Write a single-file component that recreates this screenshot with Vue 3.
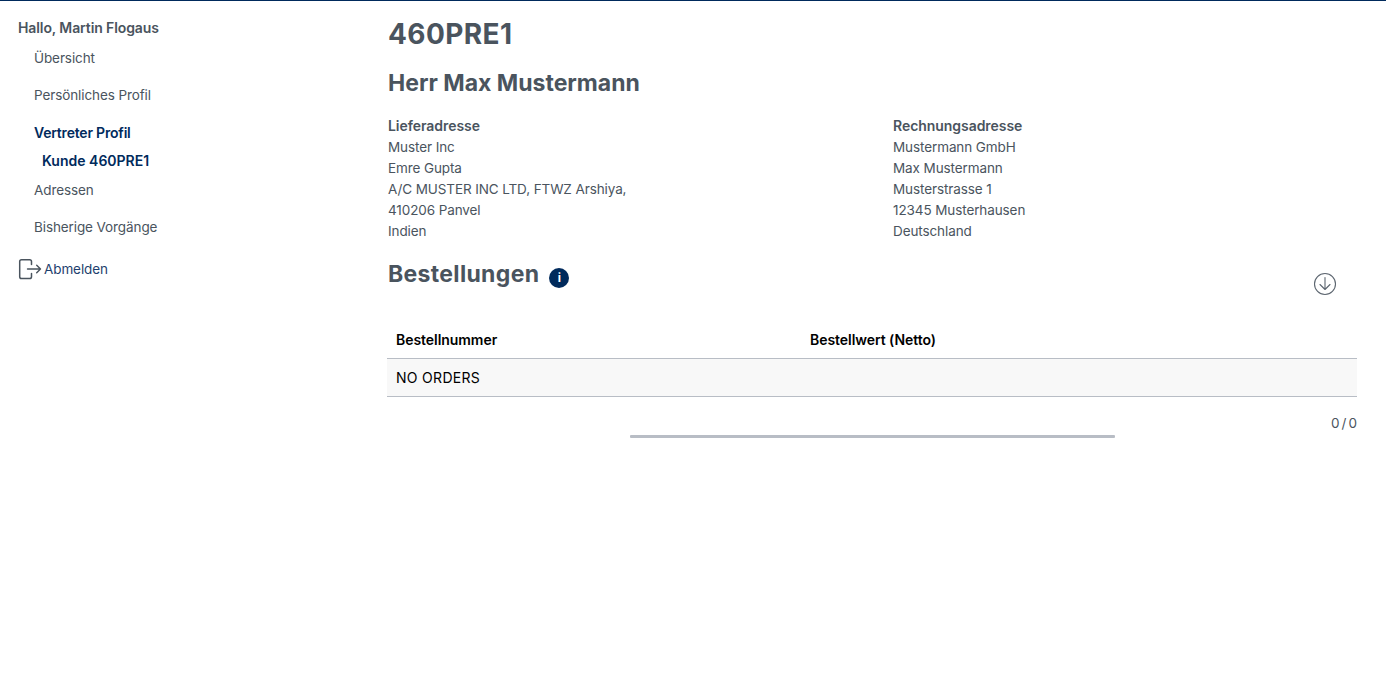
<script setup>
const navTop = [{ label: 'Übersicht' }, { label: 'Persönliches Profil' }]
const navBottom = [{ label: 'Adressen' }, { label: 'Bisherige Vorgänge' }]

const delivery = ['Muster Inc', 'Emre Gupta', 'A/C MUSTER INC LTD, FTWZ Arshiya,', '410206 Panvel', 'Indien']
const billing = ['Mustermann GmbH', 'Max Mustermann', 'Musterstrasse 1', '12345 Musterhausen', 'Deutschland']
</script>

<template>
  <div class="page">
    <aside class="sidebar">
      <div class="greeting">Hallo, Martin Flogaus</div>
      <nav class="nav">
        <a v-for="item in navTop" :key="item.label" class="nav-link">{{ item.label }}</a>
        <a class="nav-link active">Vertreter Profil</a>
        <a class="nav-sub">Kunde 460PRE1</a>
        <a v-for="item in navBottom" :key="item.label" class="nav-link">{{ item.label }}</a>
      </nav>
      <a class="logout">
        <svg class="logout-icon" width="24" height="22" viewBox="0 0 24 22" fill="none">
          <path d="M13.500 6.500V3.500Q13.500 1.700 11.700 1.700H3.500Q1.700 1.700 1.700 3.500V18.700Q1.700 20.500 3.500 20.500H11.700Q13.500 20.500 13.500 18.700V15.500" stroke="#4a545e" stroke-width="1.500" stroke-linecap="round" />
          <path d="M9.500 11H22.500M18.700 7.200L22.500 11L18.700 14.800" stroke="#4a545e" stroke-width="1.400" stroke-linecap="round" stroke-linejoin="round" />
        </svg>
        <span>Abmelden</span>
      </a>
    </aside>

    <main class="content">
      <h1 class="title">460PRE1</h1>
      <h2 class="name">Herr Max Mustermann</h2>

      <section class="addresses">
        <div class="address">
          <strong>Lieferadresse</strong>
          <span v-for="line in delivery" :key="line">{{ line }}</span>
        </div>
        <div class="address">
          <strong>Rechnungsadresse</strong>
          <span v-for="line in billing" :key="line">{{ line }}</span>
        </div>
      </section>

      <div class="orders-head">
        <h2 class="orders-title">Bestellungen</h2>
        <span class="info">i</span>
        <svg class="download" width="24" height="24" viewBox="0 0 24 24" fill="none">
          <circle cx="12" cy="12" r="10.500" stroke="#5d6670" stroke-width="1.100" />
          <path d="M12 5.500V17.500M7 12.500L12 17.500L17 12.500" stroke="#5d6670" stroke-width="1.100" stroke-linecap="round" stroke-linejoin="round" />
        </svg>
      </div>

      <div class="table">
        <div class="table-row table-head">
          <span>Bestellnummer</span>
          <span>Bestellwert (Netto)</span>
        </div>
        <div class="table-row table-body">
          <span>NO ORDERS</span>
        </div>
      </div>

      <div class="pager">0 / 0</div>
      <div class="progress"></div>
    </main>
  </div>
</template>

<style>
html,
body {
  margin: 0;
  background: #fff;
}
</style>

<style scoped>
.page {
  display: flex;
  min-height: 697px;
  box-sizing: border-box;
  border-top: 1px solid #002a5c;
  font-family: Inter, "Liberation Sans", sans-serif;
  font-size: 13.5px;
  letter-spacing: -0.1px;
  color: #4a545e;
}

.sidebar {
  width: 388px;
  flex: none;
  box-sizing: border-box;
  padding: 18px 0 0 18px;
}

.greeting {
  font-size: 14px;
  font-weight: 600;
  line-height: 17px;
}

.nav {
  display: flex;
  flex-direction: column;
  padding-left: 16px;
  margin-top: 4px;
}

.nav-link {
  line-height: 37px;
}

.nav-link.active {
  font-size: 14px;
  font-weight: 600;
  letter-spacing: -0.2px;
  color: #002a5c;
}

.nav-sub {
  padding-left: 8px;
  margin: -1px 0 1px;
  font-size: 14px;
  line-height: 21px;
  font-weight: 600;
  letter-spacing: 0;
  color: #002a5c;
}

.logout {
  display: flex;
  align-items: center;
  gap: 2px;
  margin-top: 12px;
  color: #1f3f6e;
}

.content {
  flex: 1;
  box-sizing: border-box;
  padding: 0 29px 0 0;
}

.title {
  margin: 17px 0 0;
  font-size: 28px;
  line-height: 32px;
  font-weight: 700;
  letter-spacing: 0.4px;
}

.name {
  margin: 18px 0 0;
  font-size: 23px;
  line-height: 30px;
  font-weight: 700;
  letter-spacing: 0;
}

.addresses {
  display: grid;
  grid-template-columns: 505px 1fr;
  margin-top: 17px;
}

.address {
  display: flex;
  flex-direction: column;
  line-height: 21px;
}

.address strong {
  margin-bottom: 1px;
  font-size: 14px;
  font-weight: 600;
  letter-spacing: -0.05px;
}

.orders-head {
  display: flex;
  align-items: flex-start;
  margin-top: 15px;
}

.orders-title {
  margin: 0;
  font-size: 23px;
  line-height: 34px;
  font-weight: 700;
  letter-spacing: 0.33px;
}

.info {
  width: 20px;
  height: 20px;
  margin: 11px 0 0 10px;
  border-radius: 50%;
  background: #002a5c;
  color: #fff;
  font-size: 12px;
  font-weight: 700;
  line-height: 20px;
  text-align: center;
}

.download {
  margin: 15px 20px 0 auto;
}

.table {
  margin: 24px 0 0 -1px;
  color: #000;
}

.table-row {
  display: grid;
  grid-template-columns: 414px 1fr;
  padding-left: 9px;
  align-items: center;
  border-bottom: 1px solid #b8bdc5;
}

.table-head {
  height: 38px;
  font-size: 14px;
  font-weight: 600;
  letter-spacing: -0.05px;
}

.table-body {
  height: 37px;
  background: #f8f8f8;
  font-size: 14px;
  letter-spacing: 0.3px;
}

.pager {
  margin-top: 18px;
  text-align: right;
  line-height: 17px;
  word-spacing: -1.5px;
}

.progress {
  width: 485px;
  height: 3px;
  margin: 3px 0 0 242px;
  background: #b8bdc5;
  border-radius: 1px;
}
</style>
